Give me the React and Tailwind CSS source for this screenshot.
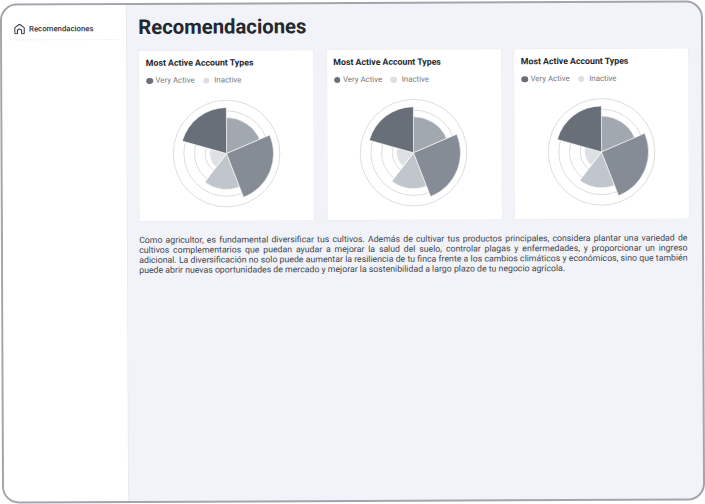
const slices = [
  { from: 0, to: 67, r: 36, fill: "#a2a8b0" },
  { from: 159, to: 217.5, r: 36, fill: "#c1c6cd" },
  { from: 217.5, to: 286, r: 17, fill: "#dde0e4" },
  { from: 67, to: 159, r: 47, fill: "#868c96" },
  { from: 286, to: 360, r: 46, fill: "#696f78" },
];

const point = (angle, r) => {
  const a = (angle * Math.PI) / 180;
  return `${(Math.sin(a) * r).toFixed(2)} ${(-Math.cos(a) * r).toFixed(2)}`;
};

function PolarChart() {
  return (
    <svg className="mx-auto block h-[110px] w-[110px]" viewBox="-55 -55 110 110">
      {[53.3, 42.7, 32, 21.3].map((r) => (
        <circle key={r} r={r} fill="none" stroke="#cdced1" strokeWidth="0.7" />
      ))}
      {slices.map((s) => (
        <path
          key={s.from}
          d={`M0 0L${point(s.from, s.r)}A${s.r} ${s.r} 0 0 1 ${point(s.to, s.r)}Z`}
          fill={s.fill}
          stroke="#fff"
          strokeWidth="0.6"
        />
      ))}
    </svg>
  );
}

function Card() {
  return (
    <section className="h-[172.3px] w-[176px] border border-[#eceef2] bg-white pt-[6px]">
      <h2 className="pl-[6.5px] text-[8.75px] leading-[13px] font-bold whitespace-nowrap text-[#23272e]">
        Most Active Account Types
      </h2>
      <div className="mt-[6px] flex h-[10px] items-center pl-[7px] text-[7.9px] leading-[10px] whitespace-nowrap text-[#77797d]">
        <span className="mr-[2.5px] h-[6.5px] w-[6.5px] rounded-full bg-[#6b6f76]" />
        <span>Very Active</span>
        <span className="mr-[4.5px] ml-[8.5px] h-[6.5px] w-[6.5px] rounded-full bg-[#dedfe1]" />
        <span>Inactive</span>
      </div>
      <div className="mt-[12.8px] pr-[1px]">
        <PolarChart />
      </div>
    </section>
  );
}

function HomeIcon() {
  return (
    <svg className="h-[11px] w-[11px]" viewBox="0 0 11 11" fill="none" stroke="#30343a" strokeWidth="1" strokeLinejoin="round" strokeLinecap="round">
      <path d="M.8 4.2 5.5.8l4.7 3.4v5.3q0 .7-.7.7H7.6V7.7a2.1 2.1 0 0 0-4.2 0v2.5H1.5q-.7 0-.7-.7Z" />
    </svg>
  );
}

export default function App() {
  return (
    <div className="h-[504px] w-[705px] overflow-hidden bg-white pt-[1.5px] pl-[1.3px] font-['Roboto','Liberation_Sans',sans-serif]">
      <div className="flex h-[500px] w-[702.5px] origin-center -rotate-[0.25deg] overflow-hidden rounded-[17px] border-[2.4px] border-[#a2a5aa] bg-[#f1f3f8]">
        <aside className="w-[125px] shrink-0 border-r border-[#e8eaef] bg-white pt-[18.2px]">
          <div className="mr-[7px] ml-[12px] flex h-[17px] items-start gap-[4px] border-b border-[#f5f5f7]">
            <HomeIcon />
            <span className="text-[7.8px] leading-[11px] font-medium whitespace-nowrap text-[#30343a]">Recomendaciones</span>
          </div>
        </aside>
        <main className="pl-[11.2px]">
          <h1 className="mt-[8.4px] text-[20.3px] leading-[28px] font-bold whitespace-nowrap text-[#23272e]">Recomendaciones</h1>
          <div className="mt-[8.4px] flex gap-[11.5px]">
            <Card />
            <Card />
            <Card />
          </div>
          <div className="mt-[12.8px] w-[548.3px] text-[8.72px] leading-[10px] whitespace-nowrap text-[#3f434a]">
            <p className="[text-align-last:justify]">Como agricultor, es fundamental diversificar tus cultivos. Además de cultivar tus productos principales, considera plantar una variedad de</p>
            <p className="[text-align-last:justify]">cultivos complementarios que puedan ayudar a mejorar la salud del suelo, controlar plagas y enfermedades, y proporcionar un ingreso</p>
            <p className="[text-align-last:justify]">adicional. La diversificación no solo puede aumentar la resiliencia de tu finca frente a los cambios climáticos y económicos, sino que también</p>
            <p>puede abrir nuevas oportunidades de mercado y mejorar la sostenibilidad a largo plazo de tu negocio agrícola.</p>
          </div>
        </main>
      </div>
    </div>
  );
}
